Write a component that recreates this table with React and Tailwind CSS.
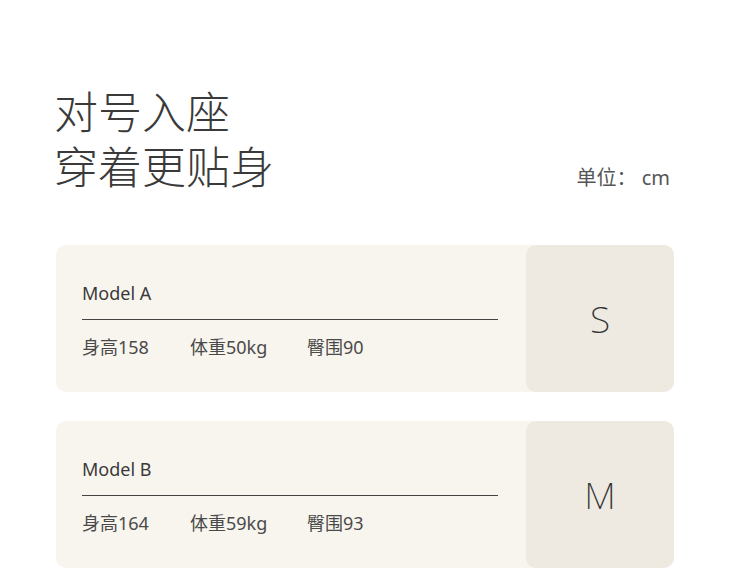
import React from "react";

const models = [
  { name: "Model A", height: "158", weight: "50kg", hip: "90", size: "S" },
  { name: "Model B", height: "164", weight: "59kg", hip: "93", size: "M" },
];

const ModelCard = ({ model }) => {
  return (
    <div className="flex h-[147px] rounded-[10px] bg-[#f8f5ef]">
      {/* Info */}
      <div className="flex-1 pl-[26px] pt-[36px]">
        <p className="text-[18px] leading-[24px] text-[#3a3a3a]">{model.name}</p>
        <div className="mt-[14px] h-px w-[416px] bg-[#444]" />
        <div className="mt-[15px] flex text-[18px] leading-[24px] text-[#4a4a4a]">
          <span className="w-[108px]">身高{model.height}</span>
          <span className="w-[117px]">体重{model.weight}</span>
          <span>臀围{model.hip}</span>
        </div>
      </div>

      {/* Size */}
      <div className="flex w-[148px] items-center justify-center rounded-[10px] bg-[#eeeae2]">
        <span className="text-[37px] font-extralight text-[#333]">{model.size}</span>
      </div>
    </div>
  );
};

export default function App() {
  return (
    <div
      className="h-[568px] w-[730px] overflow-hidden bg-white"
      style={{ fontFamily: '"Noto Sans", "Noto Sans CJK SC", sans-serif' }}
    >
      {/* Header */}
      <div className="flex items-end justify-between pl-[54px] pr-[60px] pt-[85px]">
        <h1 className="text-[44px] font-light leading-[55px] text-[#3a3a3a]">
          对号入座
          <br />
          穿着更贴身
        </h1>
        <p className="mb-[2px] whitespace-pre text-[20px] text-[#555]">单位： cm</p>
      </div>

      {/* Cards */}
      <div className="mt-[50px] flex flex-col gap-[29px] px-[56px]">
        {models.map((m) => (
          <ModelCard key={m.name} model={m} />
        ))}
      </div>
    </div>
  );
}
